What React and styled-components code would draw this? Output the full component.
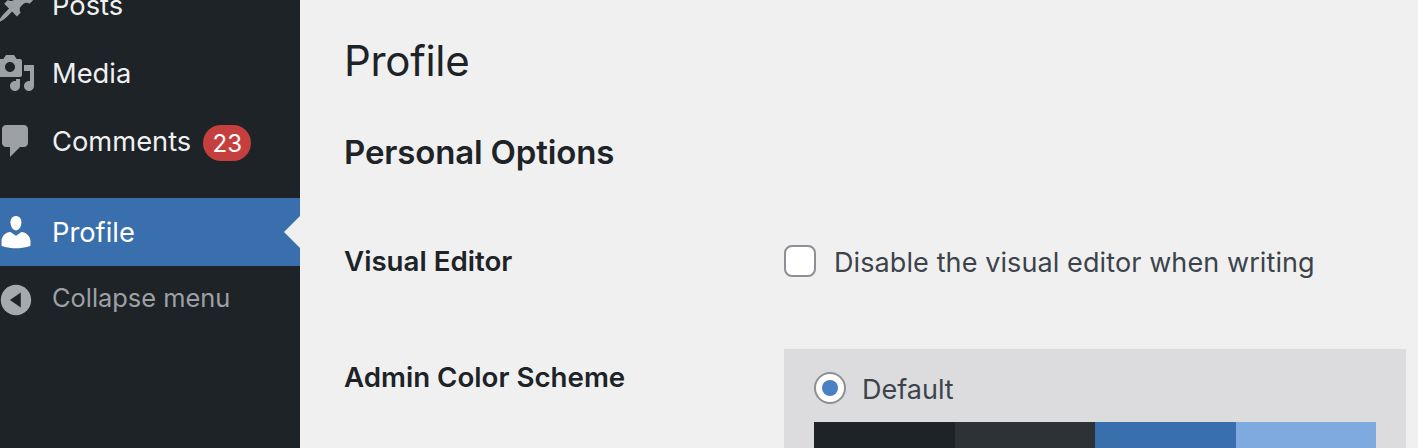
import styled, { createGlobalStyle } from 'styled-components';

const GlobalStyle = createGlobalStyle`
  html, body {
    margin: 0;
    height: 100%;
    overflow: hidden;
    background: #f0f0f1;
    font-family: Inter, 'Liberation Sans', sans-serif;
  }
`;

const Page = styled.div`
  display: flex;
  width: 1418px;
  height: 448px;
  overflow: hidden;
`;

const Sidebar = styled.nav`
  flex: 0 0 300px;
  background: #1d2327;
  overflow: hidden;
`;

const Menu = styled.ul`
  list-style: none;
  margin: -29px 0 0;
  padding: 0;
`;

const MenuItem = styled.li`
  position: relative;
  display: flex;
  align-items: center;
  height: 68px;
  margin-top: ${(p) => (p.$active ? '23px' : '0')};
  background: ${(p) => (p.$active ? '#3a6fad' : 'transparent')};
  color: ${(p) => (p.$active ? '#ffffff' : '#f0f0f1')};
  font-size: 27.3px;

  svg {
    flex: 0 0 40px;
    margin: 0 16px 0 -4px;
    fill: ${(p) => (p.$active ? '#ffffff' : '#9da0a5')};
  }

  ${(p) =>
    p.$active &&
    `&::after {
      content: '';
      position: absolute;
      right: 0;
      top: 18px;
      border: 16px solid transparent;
      border-left-width: 0;
      border-right-color: #f0f0f1;
    }`}
`;

const Badge = styled.span`
  display: inline-flex;
  align-items: center;
  justify-content: center;
  width: 48px;
  height: 36px;
  margin: 4px 0 0 12px;
  border-radius: 18px;
  background: #c53f3f;
  color: #ffffff;
  font-size: 24px;
`;

const CollapseButton = styled.div`
  display: flex;
  align-items: center;
  height: 62px;
  color: #9da0a5;
  font-size: 25.4px;

  svg {
    flex: 0 0 32px;
    margin: 6px 20px 0 0;
    fill: #a7aaad;
  }
`;

const Content = styled.main`
  flex: 1;
  padding: 0 12px 0 44px;
  color: #1d2327;
`;

const Title = styled.h1`
  margin: 0;
  padding-top: 36px;
  font-size: 42px;
  line-height: 50px;
  font-weight: 400;
  letter-spacing: -0.3px;
`;

const Section = styled.h2`
  margin: 41px 0 0;
  font-size: 33px;
  line-height: 50px;
  font-weight: 600;
  letter-spacing: -0.15px;
`;

const FormRow = styled.div`
  display: grid;
  grid-template-columns: 440px 1fr;
  margin-top: ${(p) => p.$top}px;
`;

const Label = styled.div`
  font-size: 27.7px;
  line-height: 32px;
  font-weight: 600;
  padding-top: ${(p) => p.$pad || 0}px;
`;

const CheckLine = styled.label`
  display: flex;
  align-items: center;
  gap: 18px;
  color: #3c434a;
  font-size: 27px;
  line-height: 36px;
  letter-spacing: 0.1px;
`;

const Checkbox = styled.span`
  box-sizing: border-box;
  width: 32px;
  height: 32px;
  margin-bottom: 4px;
  border: 2px solid #8c8f94;
  border-radius: 8px;
  background: #ffffff;
`;

const SchemePanel = styled.div`
  height: 99px;
  padding: 23px 30px 0;
  background: #dcdcde;
  overflow: hidden;
`;

const Radio = styled.span`
  box-sizing: border-box;
  display: flex;
  align-items: center;
  justify-content: center;
  width: 32px;
  height: 32px;
  margin-bottom: 4px;
  border: 2px solid #8c8f94;
  border-radius: 50%;
  background: #ffffff;

  &::before {
    content: '';
    width: 16px;
    height: 16px;
    border-radius: 50%;
    background: #4a80c4;
  }
`;

const RadioLine = styled(CheckLine)`
  gap: 16px;
  letter-spacing: 0;
`;

const Palette = styled.div`
  display: flex;
  height: 60px;
  margin-top: 14px;
`;

const Swatch = styled.div`
  flex: 1;
  background: ${(p) => p.$color};
`;

const PostsIcon = () => (
  <svg width="40" height="40" viewBox="0 0 20 20">
    <path d="M10.44 3.02l1.82-1.82 6.36 6.35-1.83 1.82c-1.05-.68-2.48-.57-3.41.36l-.75.75c-.92.93-1.04 2.35-.35 3.41l-1.83 1.82-2.41-2.41-2.8 2.79c-.42.42-3.38 2.71-3.8 2.29s1.86-3.39 2.28-3.81l2.79-2.79L4.1 9.36l1.83-1.82c1.05.69 2.48.57 3.41-.36l.75-.75c.93-.92 1.04-2.35.35-3.41z" />
  </svg>
);

const MediaIcon = () => (
  <svg width="40" height="40" viewBox="0 0 20 20">
    <path d="M13 11V4c0-.55-.45-1-1-1h-1.67L9 1H5L3.67 3H2c-.55 0-1 .45-1 1v7c0 .55.45 1 1 1h10c.55 0 1-.45 1-1zM7 4.5c1.38 0 2.5 1.12 2.5 2.5S8.38 9.5 7 9.5 4.5 8.38 4.5 7 5.62 4.5 7 4.5zM14 6h5v10.5c0 1.38-1.12 2.5-2.5 2.5S14 17.88 14 16.5s1.12-2.5 2.5-2.5c.17 0 .34.02.5.05V9h-3V6zm-4 8.05V13h2v3.5c0 1.38-1.12 2.5-2.5 2.5S7 17.88 7 16.5 8.12 14 9.5 14c.17 0 .34.02.5.05z" />
  </svg>
);

const CommentsIcon = () => (
  <svg width="40" height="40" viewBox="0 0 20 20">
    <path d="M5 2h9c1.1 0 2 .9 2 2v7c0 1.1-.9 2-2 2h-2l-5 5v-5H5c-1.1 0-2-.9-2-2V4c0-1.1.9-2 2-2z" />
  </svg>
);

const ProfileIcon = () => (
  <svg width="40" height="40" viewBox="0 0 20 20">
    <path d="M10 9.25c-2.27 0-2.73-3.44-2.73-3.44C7 4.02 7.82 2 9.97 2c2.16 0 2.98 2.02 2.71 3.81 0 0-.41 3.44-2.68 3.44zm0 2.57L12.72 10c2.39 0 4.52 2.33 4.52 4.53v2.49s-3.65 1.13-7.24 1.13c-3.65 0-7.24-1.13-7.24-1.13v-2.49c0-2.25 1.94-4.48 4.47-4.48z" />
  </svg>
);

const CollapseIcon = () => (
  <svg width="32" height="32" viewBox="0 0 20 20">
    <path d="M10 .5c5.25 0 9.5 4.25 9.5 9.5s-4.25 9.5-9.5 9.5S.5 15.25.5 10 4.75.5 10 .5zM13 14.7V5.3L6.2 10z" fillRule="evenodd" />
  </svg>
);

const swatches = ['#1d2327', '#2d3236', '#3a6fad', '#7eaae0'];

function App() {
  return (
    <Page>
      <GlobalStyle />
      <Sidebar>
        <Menu>
          <MenuItem><PostsIcon />Posts</MenuItem>
          <MenuItem><MediaIcon />Media</MenuItem>
          <MenuItem><CommentsIcon />Comments<Badge>23</Badge></MenuItem>
          <MenuItem $active><ProfileIcon />Profile</MenuItem>
        </Menu>
        <CollapseButton><CollapseIcon />Collapse menu</CollapseButton>
      </Sidebar>
      <Content>
        <Title>Profile</Title>
        <Section>Personal Options</Section>
        <FormRow $top={68}>
          <Label>Visual Editor</Label>
          <CheckLine><Checkbox />Disable the visual editor when writing</CheckLine>
        </FormRow>
        <FormRow $top={68}>
          <Label $pad={12}>Admin Color Scheme</Label>
          <SchemePanel>
            <RadioLine><Radio />Default</RadioLine>
            <Palette>
              {swatches.map((color) => <Swatch key={color} $color={color} />)}
            </Palette>
          </SchemePanel>
        </FormRow>
      </Content>
    </Page>
  );
}

export default App;
